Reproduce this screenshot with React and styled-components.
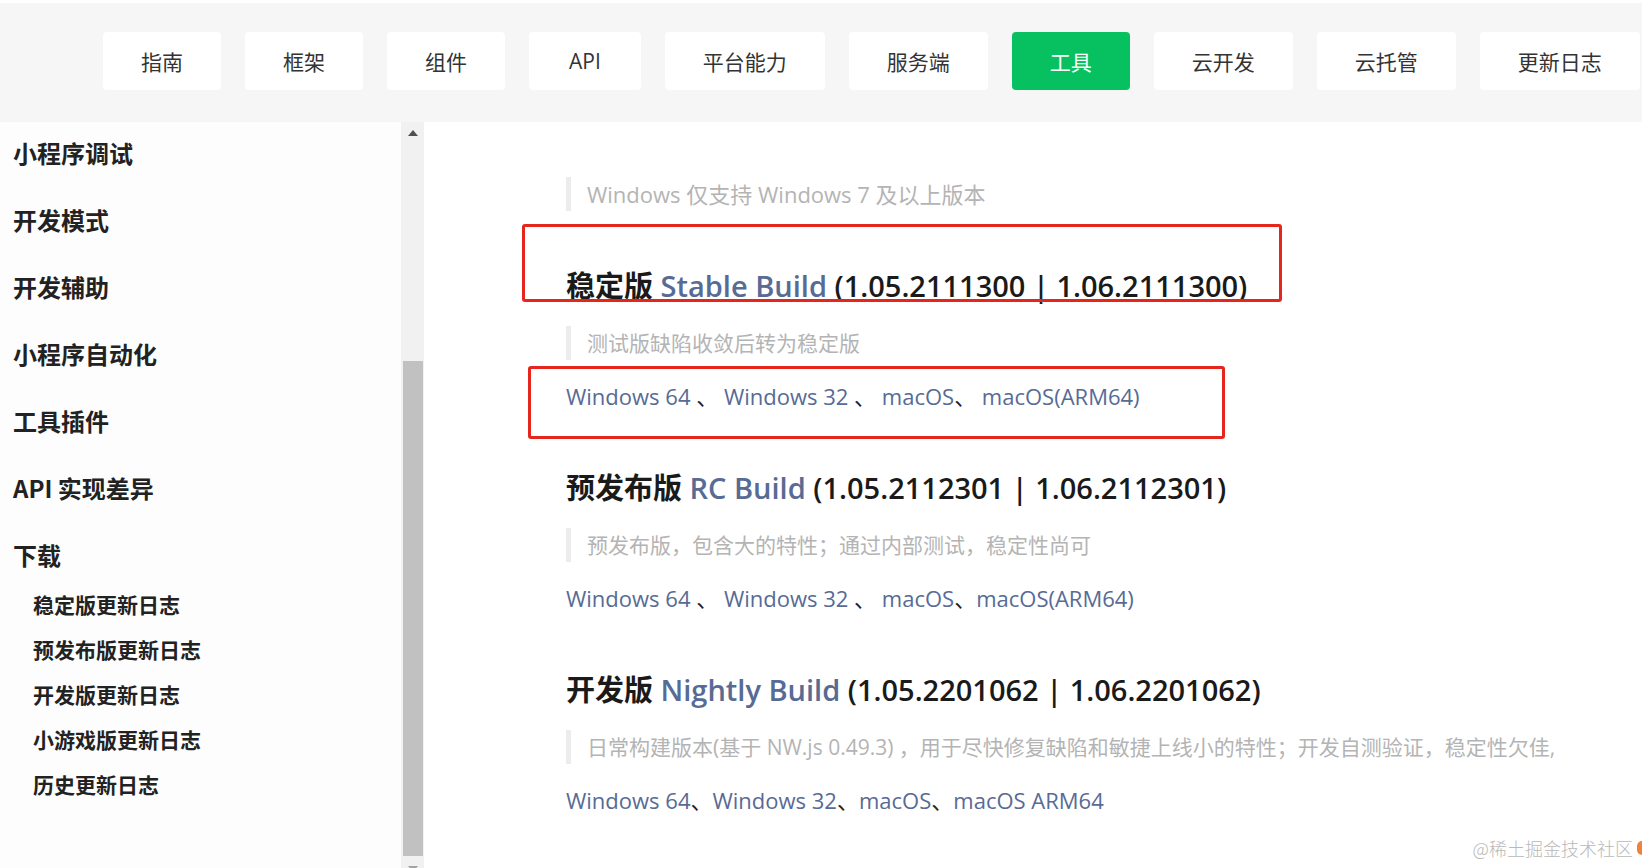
import styled, { createGlobalStyle } from 'styled-components'

const GlobalStyle = createGlobalStyle`
  html, body {
    margin: 0;
    padding: 0;
    background: #ffffff;
  }
  body {
    font-family: "Open Sans", "Noto Sans CJK SC", sans-serif;
    color: #1f1f1f;
  }
`

const Page = styled.div`
  width: 1642px;
  height: 868px;
  overflow: hidden;
  position: relative;
  display: flex;
  flex-direction: column;
`

const Header = styled.header`
  flex: none;
  height: 119px;
  border-top: 3px solid #ffffff;
  background: #f6f6f6;
  box-sizing: content-box;
`

const NavList = styled.nav`
  display: flex;
  gap: 24px;
  padding: 29px 0 0 103px;
`

const NavButton = styled.a`
  flex: none;
  height: 58px;
  padding: 0 ${p => (p.$latin ? '40px' : '38px')};
  display: flex;
  align-items: center;
  border-radius: 4px;
  font-size: 21px;
  font-weight: 400;
  white-space: nowrap;
  background: ${p => (p.$active ? '#07c160' : '#ffffff')};
  color: ${p => (p.$active ? '#ffffff' : '#333333')};
`

const Body = styled.div`
  flex: none;
  height: 758px;
  display: flex;
`

const Sidebar = styled.aside`
  flex: none;
  width: 401px;
  background: #fdfdfd;
  padding: 15px 0 0 13px;
  box-sizing: border-box;
  font-family: "Noto Sans CJK SC", sans-serif;
`

const MenuItem = styled.div`
  font-size: 24px;
  font-weight: 700;
  line-height: 32px;
  margin-bottom: ${p => (p.$open ? '19px' : '35px')};
  color: #222222;
`

const SubList = styled.div`
  padding-left: 20px;
`

const SubItem = styled.div`
  font-size: 21px;
  font-weight: 700;
  line-height: 28px;
  margin-bottom: 17px;
  color: #222222;
`

const ScrollBar = styled.div`
  flex: none;
  width: 23px;
  background: #f1f1f1;
  display: flex;
  flex-direction: column;
`

const ArrowButton = styled.div`
  flex: none;
  height: 22px;
  display: flex;
  align-items: center;
  justify-content: center;

  &::before {
    content: '';
    width: 0;
    height: 0;
    border-left: 5px solid transparent;
    border-right: 5px solid transparent;
    ${p =>
      p.$down
        ? 'border-top: 6px solid #a3a3a3;'
        : 'border-bottom: 6px solid #505050;'}
  }
`

const Track = styled.div`
  flex: 1;
  display: flex;
  flex-direction: column;
  justify-content: flex-end;
  padding: 0 1px 2px 2px;
`

const Thumb = styled.div`
  height: 495px;
  background: #c1c1c1;
`

const Main = styled.main`
  flex: 1;
  position: relative;
  padding-left: 142px;
  padding-top: 35px;
`

const Quote = styled.blockquote`
  margin: 20px 0 0;
  border-left: 5px solid #ececec;
  padding-left: 16px;
  font-size: ${p => p.$size || 21}px;
  line-height: 34px;
  color: #b4b4b4;
  white-space: nowrap;
`

const Heading = styled.h3`
  margin: 55px 0 0;
  font-size: 29px;
  font-weight: 600;
  line-height: 40px;
  color: #1a1a1a;
  white-space: nowrap;
`

const BuildName = styled.span`
  color: #576b95;
`

const Links = styled.p`
  margin: 19px 0 0;
  font-size: 22px;
  line-height: 34px;
  color: #1f1f1f;
  white-space: nowrap;
`

const DownloadLink = styled.a`
  color: #576b95;
  text-decoration: none;
`

const Annotation = styled.div`
  position: absolute;
  border: 3px solid #e6251d;
  border-radius: 3px;
  box-sizing: border-box;
  pointer-events: none;
`

const Watermark = styled.div`
  position: absolute;
  right: 0;
  bottom: 7px;
  font-family: "Noto Sans CJK SC", sans-serif;
  font-size: 18px;
  font-weight: 300;
  color: #b9b9b9;
  display: flex;
  align-items: center;
  gap: 4px;

  &::after {
    content: '';
    width: 5px;
    height: 14px;
    border-radius: 7px 0 0 7px;
    background: #f0833a;
  }
`

const navItems = ['指南', '框架', '组件', 'API', '平台能力', '服务端', '工具', '云开发', '云托管', '更新日志']

const menu = ['小程序调试', '开发模式', '开发辅助', '小程序自动化', '工具插件', 'API 实现差异']
const subMenu = ['稳定版更新日志', '预发布版更新日志', '开发版更新日志', '小游戏版更新日志', '历史更新日志']

const builds = [
  {
    label: '稳定版',
    name: 'Stable Build',
    version: '(1.05.2111300 | 1.06.2111300)',
    note: '测试版缺陷收敛后转为稳定版',
    links: ['Windows 64 ', 'Windows 32 ', 'macOS', 'macOS(ARM64)'],
    seps: ['、 ', '、 ', '、 '],
  },
  {
    label: '预发布版',
    name: 'RC Build',
    version: '(1.05.2112301 | 1.06.2112301)',
    note: '预发布版，包含大的特性；通过内部测试，稳定性尚可',
    links: ['Windows 64 ', 'Windows 32 ', 'macOS', 'macOS(ARM64)'],
    seps: ['、 ', '、 ', '、'],
  },
  {
    label: '开发版',
    name: 'Nightly Build',
    version: '(1.05.2201062 | 1.06.2201062)',
    note: '日常构建版本(基于 NW.js 0.49.3) ，用于尽快修复缺陷和敏捷上线小的特性；开发自测验证，稳定性欠佳,',
    links: ['Windows 64', 'Windows 32', 'macOS', 'macOS ARM64'],
    seps: ['、', '、', '、'],
  },
]

export default function App() {
  return (
    <Page>
      <GlobalStyle />
      <Header>
        <NavList>
          {navItems.map(item => (
            <NavButton key={item} $active={item === '工具'} $latin={item === 'API'}>
              {item}
            </NavButton>
          ))}
        </NavList>
      </Header>
      <Body>
        <Sidebar>
          {menu.map(item => (
            <MenuItem key={item}>{item}</MenuItem>
          ))}
          <MenuItem $open>下载</MenuItem>
          <SubList>
            {subMenu.map(item => (
              <SubItem key={item}>{item}</SubItem>
            ))}
          </SubList>
        </Sidebar>
        <ScrollBar>
          <ArrowButton />
          <Track>
            <Thumb />
          </Track>
          <ArrowButton $down />
        </ScrollBar>
        <Main>
          <Quote $size={22}>Windows 仅支持 Windows 7 及以上版本</Quote>
          {builds.map(b => (
            <section key={b.name}>
              <Heading>
                {b.label} <BuildName>{b.name}</BuildName> {b.version}
              </Heading>
              <Quote>{b.note}</Quote>
              <Links>
                {b.links.map((l, i) => (
                  <span key={l}>
                    <DownloadLink>{l}</DownloadLink>
                    {b.seps[i] || ''}
                  </span>
                ))}
              </Links>
            </section>
          ))}
          <Annotation style={{ left: 98, top: 102, width: 760, height: 78 }} />
          <Annotation style={{ left: 104, top: 244, width: 697, height: 73 }} />
        </Main>
      </Body>
      <Watermark>@稀土掘金技术社区</Watermark>
    </Page>
  )
}
